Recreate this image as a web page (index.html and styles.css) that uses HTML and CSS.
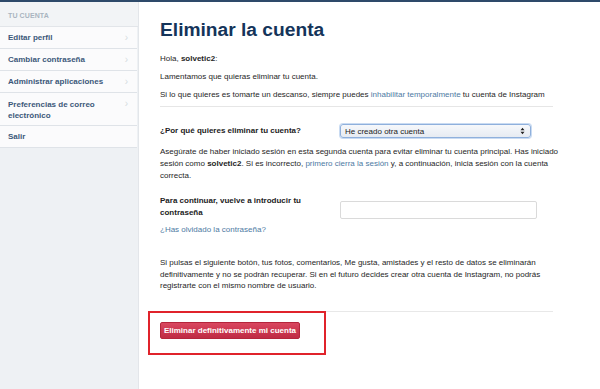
FILE: index.html
```html
<!DOCTYPE html>
<html lang="es">
<head>
<meta charset="utf-8">
<title>Eliminar la cuenta</title>
<link rel="stylesheet" href="styles.css">
</head>
<body>
<div class="topbar"></div>
<div class="page">
  <aside class="sidebar">
    <div class="side-head">TU CUENTA</div>
    <ul class="side-list">
      <li class="side-item"><span>Editar perfil</span><span class="chev">›</span></li>
      <li class="side-item"><span>Cambiar contraseña</span><span class="chev">›</span></li>
      <li class="side-item"><span>Administrar aplicaciones</span><span class="chev">›</span></li>
      <li class="side-item tall"><span>Preferencias de correo<br>electrónico</span><span class="chev">›</span></li>
      <li class="side-item"><span>Salir</span></li>
    </ul>
  </aside>
  <main class="main">
    <h1 class="title">Eliminar la cuenta</h1>
    <p class="txt">Hola, <b>solvetic2</b>:</p>
    <p class="txt">Lamentamos que quieras eliminar tu cuenta.</p>
    <p class="txt">Si lo que quieres es tomarte un descanso, siempre puedes <a class="lnk" href="#">inhabilitar temporalmente</a> tu cuenta de Instagram</p>
    <div class="rule"></div>
    <div class="row q-row">
      <div class="label">¿Por qué quieres eliminar tu cuenta?</div>
      <div class="select"><span>He creado otra cuenta</span>
        <svg class="arrows" width="5" height="8" viewBox="0 0 5 8"><path d="M0.5 3.2 L2.5 0.8 L4.5 3.2 Z M0.5 4.8 L2.5 7.2 L4.5 4.8 Z" fill="#222"/></svg>
      </div>
    </div>
    <p class="para">Asegúrate de haber iniciado sesión en esta segunda cuenta para evitar eliminar tu cuenta principal. Has iniciado sesión como <b>solvetic2</b>. Si es incorrecto, <a class="lnk" href="#">primero cierra la sesión</a> y, a continuación, inicia sesión con la cuenta correcta.</p>
    <div class="row pw-row">
      <div class="label pw-label">Para continuar, vuelve a introducir tu contraseña</div>
      <div class="input"></div>
    </div>
    <a class="lnk forgot" href="#">¿Has olvidado la contraseña?</a>
    <p class="para warn">Si pulsas el siguiente botón, tus fotos, comentarios, Me gusta, amistades y el resto de datos se eliminarán definitivamente y no se podrán recuperar. Si en el futuro decides crear otra cuenta de Instagram, no podrás registrarte con el mismo nombre de usuario.</p>
    <div class="footer">
      <div class="highlight"></div>
      <button class="btn">Eliminar definitivamente mi cuenta</button>
    </div>
  </main>
</div>
</body>
</html>
```

FILE: styles.css
```css
* { box-sizing: border-box; }
html, body { margin: 0; padding: 0; background: #fff; }
body {
  font-family: "Liberation Sans", Arial, sans-serif;
  color: #262626;
  width: 600px;
  height: 389px;
  overflow: hidden;
}
.topbar { height: 2px; background: #2e4a6a; }
.page { display: flex; height: 387px; }

.sidebar {
  width: 139px;
  flex: none;
  background: #eef1f4;
  border-right: 1px solid #e3e6ea;
}
.side-head {
  height: 25px;
  padding: 10px 0 0 8px;
  font-size: 7px;
  font-weight: bold;
  color: #a9b4c0;
  background: #f2f4f6;
  border-bottom: 1px solid #e2e5e9;
  letter-spacing: 0.1px;
}
.side-list { list-style: none; margin: 0; padding: 0; width: 137px; }
.side-item {
  display: flex;
  justify-content: space-between;
  align-items: flex-start;
  height: 22px;
  padding: 6px 9px 0 8px;
  background: #fbfbfc;
  border-bottom: 1px solid #dfe3e8;
  font-size: 8px;
  font-weight: bold;
  color: #3b587a;
  line-height: 10px;
}
.side-item.tall { height: 33px; padding-top: 6px; line-height: 11px; }
.chev { color: #d6dbe0; font-weight: normal; font-size: 10px; line-height: 10px; }

.main { flex: 1; padding: 0 0 0 21px; position: relative; }
.title {
  margin: 15px 0 0;
  font-size: 19.2px;
  line-height: 26px;
  font-weight: bold;
  color: #14345a;
  letter-spacing: 0;
}
.txt { margin: 0; font-size: 8px; line-height: 18px; }
.title + .txt { margin-top: 7px; }
.lnk { color: #4d7aa3; text-decoration: none; }
.rule { width: 393px; height: 1px; background: #e6e6e6; margin-top: 2px; }

.row { display: grid; grid-template-columns: 180px auto; align-items: center; }
.q-row { margin-top: 17px; }
.label { font-size: 8px; font-weight: bold; color: #222; line-height: 12px; }
.select {
  width: 191px;
  height: 14px;
  border: 1px solid #8fb0dc;
  border-radius: 3px;
  background: linear-gradient(#f6f8fb, #e6ebf2);
  box-shadow: 0 0 0 1px #c9dbf2;
  display: flex;
  align-items: center;
  justify-content: space-between;
  padding: 0 5px 0 4px;
  font-size: 8px;
  color: #222;
}
.arrows { display: block; }

.para { margin: 0; font-size: 8px; line-height: 12px; width: 414px; }
.q-row + .para { margin-top: 8px; }
.pw-row { margin-top: 13px; align-items: start; }
.input {
  align-self: end;
  width: 197px;
  height: 18px;
  border: 1px solid #dadada;
  border-radius: 2px;
  background: #fff;
}
.forgot { display: block; font-size: 8px; line-height: 12px; margin-top: 5px; }
.warn { margin-top: 21px; width: 414px; line-height: 11.5px; }

.footer {
  position: relative;
  width: 393px;
  margin-top: 19px;
  border-top: 1px solid #e8e8e8;
  padding-top: 10px;
}
.btn {
  display: block;
  width: 140px;
  height: 17px;
  border: 1px solid #b4253c;
  border-radius: 2px;
  background: linear-gradient(#d9475f, #bf2b44);
  color: #fff;
  font-family: "Liberation Sans", Arial, sans-serif;
  font-size: 8px;
  font-weight: bold;
  padding: 0;
  line-height: 15px;
}
.highlight {
  position: absolute;
  left: -12px;
  top: -1px;
  width: 178px;
  height: 44px;
  border: 2px solid #e0232b;
}
```
